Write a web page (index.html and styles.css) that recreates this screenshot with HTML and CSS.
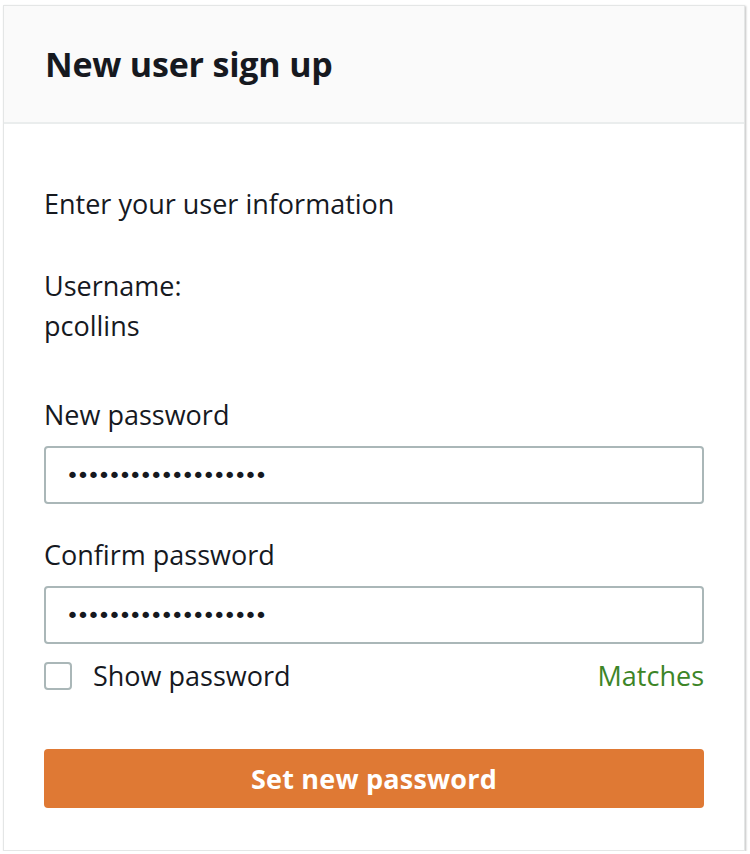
FILE: index.html
```html
<!DOCTYPE html>
<html lang="en">
<head>
<meta charset="utf-8">
<title>New user sign up</title>
<link rel="stylesheet" href="styles.css">
</head>
<body>
<div class="card">
  <div class="card-header">
    <h1 class="title">New user sign up</h1>
  </div>
  <form class="card-body">
    <p class="intro">Enter your user information</p>
    <div class="user">
      <div>Username:</div>
      <div>pcollins</div>
    </div>
    <label class="label label-first" for="pw1">New password</label>
    <input class="field" id="pw1" type="password" value="abcdefghijklmnopqrs" readonly>
    <label class="label" for="pw2">Confirm password</label>
    <input class="field" id="pw2" type="password" value="abcdefghijklmnopqrs" readonly>
    <div class="row">
      <label class="show">
        <span class="box"></span>
        <span>Show password</span>
      </label>
      <span class="matches">Matches</span>
    </div>
    <button class="submit" type="button">Set new password</button>
  </form>
</div>
</body>
</html>
```

FILE: styles.css
```css
html, body {
  margin: 0;
  padding: 0;
  background: #ffffff;
}

body {
  font-family: "Open Sans", "Noto Sans", sans-serif;
  color: #16191f;
  padding: 5px 0 0 3px;
}

.card {
  width: 742px;
  height: 846px;
  box-sizing: border-box;
  border: 1px solid #e4e6e6;
  box-shadow: 1px 1px 2px rgba(0, 0, 0, 0.25);
  background: #ffffff;
  display: flex;
  flex-direction: column;
}

.card-header {
  height: 118px;
  box-sizing: border-box;
  background: #fafafa;
  border-bottom: 2px solid #eaeded;
  display: flex;
  align-items: center;
  padding-left: 41px;
}

.title {
  margin: 0;
  font-size: 34px;
  font-weight: 700;
  letter-spacing: -0.2px;
  line-height: 40px;
}

.card-body {
  display: flex;
  flex-direction: column;
  padding: 60px 40px 0 40px;
  font-size: 27px;
  line-height: 40px;
}

.intro {
  margin: 0;
}

.user {
  margin-top: 42px;
}

.label {
  display: block;
  margin-top: 31px;
}

.label-first {
  margin-top: 49px;
}

.field {
  margin-top: 11px;
  height: 58px;
  box-sizing: border-box;
  border: 2px solid #aab7b8;
  border-radius: 4px;
  padding: 0 20px;
  font-family: "DejaVu Sans", sans-serif;
  font-size: 22px;
  letter-spacing: -2.5px;
  color: #16191f;
  background: #ffffff;
  outline: none;
}

.row {
  margin-top: 12px;
  display: flex;
  align-items: center;
  justify-content: space-between;
}

.show {
  display: flex;
  align-items: center;
  gap: 21px;
}

.box {
  width: 28px;
  height: 28px;
  box-sizing: border-box;
  border: 2px solid #aab7b8;
  border-radius: 4px;
  background: #ffffff;
}

.matches {
  color: #3d8527;
}

.submit {
  margin-top: 53px;
  height: 59px;
  border: none;
  border-radius: 4px;
  background: #df7934;
  color: #ffffff;
  font-family: "Open Sans", "Noto Sans", sans-serif;
  font-size: 27px;
  font-weight: 700;
  letter-spacing: 0.2px;
}
```
